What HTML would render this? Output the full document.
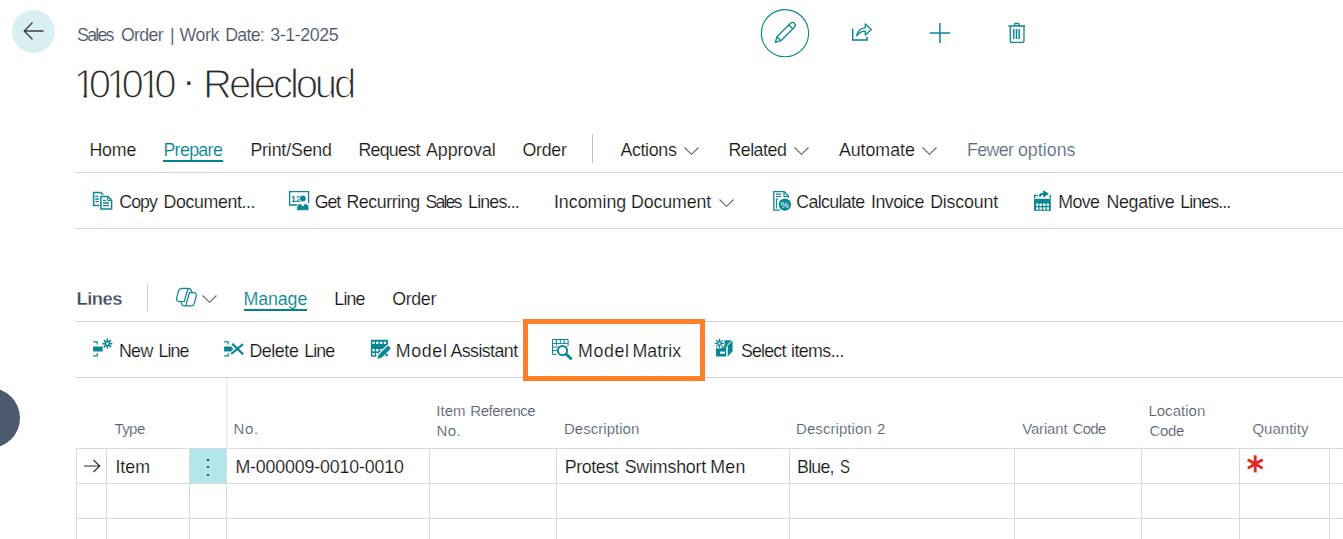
<!DOCTYPE html>
<html lang="en">
<head>
<meta charset="utf-8">
<title>Sales Order</title>
<style>
html,body{margin:0;padding:0;background:#fff;}
body{width:1343px;height:539px;position:relative;overflow:hidden;font-family:"Liberation Sans",sans-serif;}
.t{position:absolute;white-space:pre;}
.a{position:absolute;}
.hl{position:absolute;height:1px;background:#d1d5da;}
.vl{position:absolute;width:1px;background:#d3d5de;}
.gl{position:absolute;background:#d9dade;}
svg{position:absolute;overflow:visible;}
</style>
</head>
<body>
<!-- back button -->
<div class="a" style="left:12px;top:9.600px;width:43px;height:43px;border-radius:50%;background:#d9f0f3;"></div>
<svg style="left:23px;top:21px" width="22" height="20" viewBox="0 0 22 20"><path d="M20.5 10H1.5M9.5 1.5L1.2 10l8.3 8.5" fill="none" stroke="#3c3c3c" stroke-width="1.3"/></svg>

<svg id="icons" style="left:0;top:0" width="1343" height="539" viewBox="0 0 1343 539" fill="none" stroke="#0b8793" stroke-width="1.2">
<!-- header: edit circle + pencil -->
<circle cx="785" cy="33.200" r="23.600" stroke-width="1.100"/>
<g stroke-width="1.300" stroke-linejoin="round">
<path d="M775.300 42.400l1.700-5.600 13.500-13.500a2.700 2.700 0 0 1 3.800 0l.1.100a2.700 2.700 0 0 1 0 3.800l-13.500 13.500z"/>
<path d="M777 36.800l3.900 3.900M788.800 25l3.900 3.900"/>
</g>
<!-- share -->
<path d="M852.700 28.400v11.700h14.400v-3" stroke-width="1.500"/>
<path d="M856.600 35.800c1-5 4.300-7.800 8.700-8v-3.900l6 5.600-6 5.600v-3.900c-3.500.1-6.300 1.400-8.700 4.600z" stroke-width="1.300" stroke-linejoin="round"/>
<!-- plus -->
<path d="M939.900 22.900v20.200M929.700 33h20.400" stroke-width="1.500"/>
<!-- trash -->
<g stroke-width="1.300">
<path d="M1008.300 26h16.900M1014.400 26v-1.500a1 1 0 0 1 1-1h2.700a1 1 0 0 1 1 1V26"/>
<path d="M1010.300 26v14.400a2 2 0 0 0 2 2h9.700a2 2 0 0 0 2-2V26"/>
<path d="M1013.800 29v10M1016.500 29v10M1019.200 29v10" stroke-width="1.500"/>
</g>

<!-- Copy Document -->
<g stroke-width="1.500">
<path d="M99.500 205.600H93.600V192.500h7.300l2.300 2.300"/>
<path d="M95.300 196.300h3M95.300 199h3.600M95.300 201.600h3.600" stroke-width="1.350"/>
<path d="M100.900 196.600h7l3.700 3.700v8.800h-10.700z"/>
<path d="M107.700 196.800v3.700h3.700" stroke-width="1"/>
<path d="M103 200.400h2.800M103 203h6M103 205.600h6" stroke-width="1.350"/>
</g>
<!-- Get Recurring Sales Lines -->
<path d="M297 205h-7.400v-13.400h19v11.500" stroke-width="1.300"/>
<text x="291" y="202.200" font-size="9.500" textLength="10" lengthAdjust="spacingAndGlyphs" stroke="none" fill="#0b8793" font-family="Liberation Sans, sans-serif" font-weight="700">12</text>
<circle cx="302.800" cy="198.500" r="3.400" fill="#0b8793" stroke="#fff" stroke-width=".8"/>
<path d="M296.800 210.400v-2.400a4.400 4.400 0 0 1 4-4.400l2 2.700 2-2.700a4.400 4.400 0 0 1 4 4.400v2.400z" fill="#0b8793" stroke="#fff" stroke-width=".6"/>
<!-- Calculate Invoice Discount -->
<g stroke-width="1.300">
<path d="M780 210.200h-6.200v-18.500h10.400l4.200 4.500v1.500"/>
<path d="M784 191.900v4.600h4.400" stroke-width="1.100"/>
<path d="M776 194.100h5M776 196.500h5" stroke-width="1.200"/>
<path d="M778.400 199h-2v9.500" stroke-width="1.100"/>
</g>
<circle cx="784.900" cy="204.600" r="6.200" fill="#0b8793" stroke="none"/>
<text x="780.800" y="207.900" font-size="9.200" stroke="none" fill="#fff" font-family="Liberation Sans, sans-serif">%</text>
<!-- Move Negative Lines -->
<path d="M1034 198.800h16.800v12h-16.800z" fill="#0b8793" stroke="none"/>
<path d="M1034.600 198.500v-3h3.200M1050.200 198.500v-3.700" stroke-width="1.300"/>
<g fill="#fff" stroke="none">
<rect x="1036" y="203.500" width="2.300" height="2.500"/><rect x="1039.500" y="203.500" width="2.400" height="2.500"/><rect x="1043.100" y="203.500" width="2.400" height="2.500"/><rect x="1046.700" y="203.500" width="2.300" height="2.500"/>
<rect x="1036" y="207.300" width="2.300" height="2.400"/><rect x="1039.500" y="207.300" width="2.400" height="2.400"/><rect x="1043.100" y="207.300" width="2.400" height="2.400"/><rect x="1046.700" y="207.300" width="2.300" height="2.400"/>
</g>
<path d="M1039.900 196.800c0-2.200 1.400-3 3.200-3h2.500" stroke-width="2"/>
<path d="M1043.600 190.700l4.700 3.100-4.700 3.200z" fill="#0b8793" stroke-width=".8" stroke-linejoin="round"/>

<!-- Copilot -->
<g stroke-width="1.200" stroke-linejoin="round" stroke-linecap="round">
<path d="M184.300 301.500h-5c-2.200 0-3.200-1.600-2.600-3.800l2-7.200c.4-1.400 1.200-2.200 2.600-2.200h7.200c1.600 0 2.600 1 3.200 3.200l.3 1.200"/>
<path d="M189.300 292.700h4.300c2.200 0 3.200 1.600 2.600 3.800l-2 7.200c-.4 1.400-1.200 2.200-2.600 2.200h-7.200c-1.600 0-2.600-1-3.200-3.200l-.3-1.200"/>
<path d="M187.900 288.500l-3.600 13M189.400 292.700l-3.500 12.800"/>
</g>
<!-- New Line -->
<g stroke-width="1.200">
<path d="M93.100 341.900h4.100v2.700M93.100 355.900h4.100v-2.700"/>
<rect x="93.100" y="346.500" width="9.600" height="5" fill="#0b8793" stroke="none"/>
<path d="M107.400 338.600v10M102.400 343.600h10M103.900 340.100l7 7M110.900 340.100l-7 7" stroke-width="1.7"/>
<circle cx="107.400" cy="343.600" r="1.2" fill="#fff" stroke="none"/>
</g>
<!-- Delete Line -->
<g stroke-width="1.200">
<path d="M224.100 341.900h4.100v2.700M224.100 355.900h4.100v-2.700"/>
<path d="M224.100 346.500h7l2.200 2.500-2.200 2.500h-7z" fill="#0b8793" stroke="none"/>
<path d="M232.200 343.800l11 10.600M243 344.200l-11.800 9.800" stroke-width="2.200"/>
</g>
<!-- Model Assistant -->
<path d="M370.900 339.800h17v8l-8.500 9h-8.500z" fill="#0b8793" stroke="none"/>
<g fill="#fff" stroke="none">
<rect x="372.400" y="341.700" width="2.300" height="2.200"/><rect x="376.100" y="341.700" width="2.400" height="2.200"/><rect x="379.900" y="341.700" width="2.400" height="2.200"/><rect x="383.700" y="341.700" width="2.300" height="2.200"/>
<rect x="372.400" y="349" width="2.300" height="2.400"/><rect x="376.100" y="349" width="2.400" height="2.400"/><rect x="379.900" y="349" width="2" height="1.500"/>
<rect x="372.400" y="353" width="2.300" height="2.300"/><rect x="376.100" y="353" width="2" height="2.300"/>
</g>
<path d="M379.800 356.600l8.400-8.400" stroke="#fff" stroke-width="6.400" stroke-linecap="round"/>
<path d="M380.900 355.500l7.300-7.300" stroke-width="4.300" stroke-linecap="round"/>
<path d="M377.300 358.900l1.500-4.300 2.800 2.800z" fill="#0b8793" stroke="none"/>
<rect x="385.500" y="353.800" width="2.400" height="2.500" fill="#0b8793" stroke="none"/>
<!-- Model Matrix -->
<g stroke-width="1">
<path d="M556.500 354.500h-4v-15h15.600v6.500"/>
<path d="M552.500 343.400h15.600M552.500 347h4.500M552.500 350.600h4.500M556.300 339.500v6M560.300 339.500v4M564.200 339.500v4M557 347h10.500" />
</g>
<circle cx="562.500" cy="350.600" r="4.600" stroke-width="2" fill="#fff"/>
<path d="M566.300 354.300l4.500 4.200" stroke-width="2.900" stroke-linecap="round"/>
<!-- Select items -->
<path d="M716 346.500h10.200v10h-10.200z" fill="#0b8793" stroke="none"/>
<path d="M724.300 340.200h7.500l-4.500 4.500v2h-3z" fill="#0b8793" stroke="none"/>
<circle cx="719.200" cy="343.200" r="5.300" fill="#fff" stroke="none"/>
<rect x="720" y="351.600" width="5" height="2.100" fill="#fff" stroke="none"/>
<path d="M727.700 345.400l4.900-4.900v10.600a.8.800 0 0 1-.3.600l-4.600 4.700z" fill="#0b8793" stroke="none"/>
<path d="M719.400 338.800v9.200M714.800 343.400h9.200M716.200 340.200l6.400 6.400M722.600 340.200l-6.400 6.400" stroke-width="1.300"/>
<circle cx="719.400" cy="343.400" r="1" fill="#fff" stroke="none"/>
</svg>

<!-- action bar 1 -->
<div class="a" style="left:163px;top:160px;width:60px;height:2px;background:#00838f;"></div>
<div class="vl" style="left:592px;top:134px;height:29px;background:#bfc4cd;"></div>
<div class="hl" style="left:76px;top:172px;width:1267px;"></div>
<div class="hl" style="left:76px;top:228px;width:1267px;"></div>
<svg class="chev" style="left:684px;top:147px" width="15" height="8" viewBox="0 0 15 8"><path d="M.5.500l7 6.800 7-6.800" fill="none" stroke="#5f5f5f" stroke-width="1.050"/></svg>
<svg class="chev" style="left:793.500px;top:147px" width="15" height="8" viewBox="0 0 15 8"><path d="M.5.500l7 6.800 7-6.800" fill="none" stroke="#5f5f5f" stroke-width="1.050"/></svg>
<svg class="chev" style="left:922px;top:147px" width="15" height="8" viewBox="0 0 15 8"><path d="M.5.500l7 6.800 7-6.800" fill="none" stroke="#5f5f5f" stroke-width="1.050"/></svg>
<svg class="chev" style="left:719px;top:199px" width="15" height="8" viewBox="0 0 15 8"><path d="M.5.500l7 6.800 7-6.800" fill="none" stroke="#5f5f5f" stroke-width="1.050"/></svg>
<!--ICONS1-->

<!-- lines section -->
<div class="vl" style="left:147px;top:283px;height:28px;background:#cdd1d7;"></div>
<div class="a" style="left:244px;top:309px;width:63px;height:2px;background:#00838f;"></div>
<div class="hl" style="left:76px;top:321px;width:1267px;"></div>
<div class="hl" style="left:76px;top:377px;width:1267px;"></div>
<svg class="chev" style="left:202px;top:295.200px" width="15" height="8" viewBox="0 0 15 8"><path d="M.5.500l7 6.800 7-6.800" fill="none" stroke="#5f5f5f" stroke-width="1.050"/></svg>
<!--ICONS2-->
<div class="a" style="left:523px;top:319px;width:182px;height:62px;border:5px solid #ff7f27;box-sizing:border-box;"></div>

<!-- left dark bubble -->
<div class="a" style="left:-40px;top:388px;width:60px;height:60px;border-radius:50%;background:#4d596c;"></div>

<!-- grid -->
<div class="gl" style="left:225.500px;top:378px;width:2px;height:70px;background:#eff0f2;"></div>
<div class="a" style="left:190px;top:449px;width:36px;height:34px;background:#b1e7eb;"></div>
<div class="gl" style="left:76px;top:448px;width:1267px;height:1px;"></div>
<div class="gl" style="left:76px;top:483px;width:1267px;height:1px;"></div>
<div class="gl" style="left:76px;top:518px;width:1267px;height:1px;"></div>
<div class="gl" style="left:76px;top:448px;width:1px;height:91px;"></div>
<div class="gl" style="left:106px;top:448px;width:1px;height:91px;"></div>
<div class="gl" style="left:189px;top:448px;width:1px;height:91px;"></div>
<div class="gl" style="left:226px;top:448px;width:1px;height:91px;"></div>
<div class="gl" style="left:429px;top:448px;width:1px;height:91px;"></div>
<div class="gl" style="left:556px;top:448px;width:1px;height:91px;"></div>
<div class="gl" style="left:789px;top:448px;width:1px;height:91px;"></div>
<div class="gl" style="left:1014px;top:448px;width:1px;height:91px;"></div>
<div class="gl" style="left:1141px;top:448px;width:1px;height:91px;"></div>
<div class="gl" style="left:1239px;top:448px;width:1px;height:91px;"></div>
<div class="gl" style="left:1329px;top:448px;width:1px;height:91px;"></div>
<!-- row arrow -->
<svg style="left:84px;top:458.600px" width="17" height="14" viewBox="0 0 17 14"><path d="M0 7h15.500M9.500 1l6.300 6-6.300 6" fill="none" stroke="#2a2a2a" stroke-width="1.100"/></svg>
<!-- dots -->
<div class="a" style="left:206.500px;top:459px;width:2.200px;height:2.200px;border-radius:50%;background:#111;"></div>
<div class="a" style="left:206.500px;top:466.300px;width:2.200px;height:2.200px;border-radius:50%;background:#111;"></div>
<div class="a" style="left:206.500px;top:473.600px;width:2.200px;height:2.200px;border-radius:50%;background:#111;"></div>
<!-- red asterisk -->
<span id="req" class="t" style="left:1244.900px;top:450px;font-family:'DejaVu Sans',sans-serif;font-size:25px;line-height:30px;color:#e3261f;-webkit-text-stroke:0.9px #fff;">✱</span>

<span class="t" style="left:77.1px;top:27px;font-size:17.8px;line-height:17.8px;color:#465064;"><span style="display:inline-block;width:43.8px;letter-spacing:-1.797px;-webkit-text-stroke:0.16px #fff;">Sales </span><span style="display:inline-block;width:49.1px;letter-spacing:-0.683px;-webkit-text-stroke:0.16px #fff;">Order </span><span style="display:inline-block;width:9.6px;-webkit-text-stroke:0.16px #fff;">| </span><span style="display:inline-block;width:45.7px;letter-spacing:-0.491px;-webkit-text-stroke:0.16px #fff;">Work </span><span style="display:inline-block;width:44.9px;letter-spacing:-0.765px;-webkit-text-stroke:0.16px #fff;">Date: </span><span style="display:inline-block;letter-spacing:-0.370px;-webkit-text-stroke:0.16px #fff;">3-1-2025</span></span>
<span class="t" style="left:73.4px;top:64px;font-size:40.2px;line-height:40.2px;color:#2a2a2a;"><span style="display:inline-block;width:15.45px;-webkit-text-stroke:1.2px #fff;clip-path:polygon(0 0,100% 0,100% 29.05px,13.55px 29.05px,13.55px 100%,10.20px 100%,10.20px 29.05px,0 29.05px);transform:translateY(0.5px);">1</span><span style="display:inline-block;width:17.25px;-webkit-text-stroke:1.2px #fff;transform:translateY(0.5px);">0</span><span style="display:inline-block;width:15.45px;-webkit-text-stroke:1.2px #fff;clip-path:polygon(0 0,100% 0,100% 29.05px,13.55px 29.05px,13.55px 100%,10.20px 100%,10.20px 29.05px,0 29.05px);transform:translateY(0.5px);">1</span><span style="display:inline-block;width:17.55px;-webkit-text-stroke:1.2px #fff;transform:translateY(0.5px);">0</span><span style="display:inline-block;width:15.1px;-webkit-text-stroke:1.2px #fff;clip-path:polygon(0 0,100% 0,100% 29.05px,13.55px 29.05px,13.55px 100%,10.20px 100%,10.20px 29.05px,0 29.05px);transform:translateY(0.5px);">1</span><span style="display:inline-block;width:28.9px;-webkit-text-stroke:1.2px #fff;transform:translateY(0.5px);">0 </span><span style="display:inline-block;width:20px;font-size:34.6px;position:relative;top:-4px;-webkit-text-stroke:0.16px #fff;">· </span><span style="display:inline-block;letter-spacing:-3.172px;-webkit-text-stroke:1.2px #fff;transform:translateY(0.5px);">Relecloud</span></span>
<span class="t" style="left:89.4px;top:142px;font-size:17.8px;line-height:17.8px;color:#161616;letter-spacing:-0.181px;-webkit-text-stroke:0.16px #fff;">Home</span>
<span class="t" style="left:163.4px;top:142px;font-size:17.8px;line-height:17.8px;color:#00838f;letter-spacing:-0.645px;-webkit-text-stroke:0.16px #fff;">Prepare</span>
<span class="t" style="left:250.4px;top:142px;font-size:17.8px;line-height:17.8px;color:#161616;letter-spacing:-0.160px;-webkit-text-stroke:0.16px #fff;">Print/Send</span>
<span class="t" style="left:358.4px;top:142px;font-size:17.8px;line-height:17.8px;color:#161616;"><span style="display:inline-block;width:67.7px;letter-spacing:-0.715px;-webkit-text-stroke:0.16px #fff;">Request </span><span style="display:inline-block;letter-spacing:-0.075px;-webkit-text-stroke:0.16px #fff;">Approval</span></span>
<span class="t" style="left:522.4px;top:142px;font-size:17.8px;line-height:17.8px;color:#161616;letter-spacing:-0.258px;-webkit-text-stroke:0.16px #fff;">Order</span>
<span class="t" style="left:620.4px;top:142px;font-size:17.8px;line-height:17.8px;color:#161616;letter-spacing:-0.320px;-webkit-text-stroke:0.16px #fff;">Actions</span>
<span class="t" style="left:728.4px;top:142px;font-size:17.8px;line-height:17.8px;color:#161616;letter-spacing:-0.483px;-webkit-text-stroke:0.16px #fff;">Related</span>
<span class="t" style="left:838.9px;top:142px;font-size:17.8px;line-height:17.8px;color:#161616;letter-spacing:-0.031px;-webkit-text-stroke:0.16px #fff;">Automate</span>
<span class="t" style="left:966.9px;top:142px;font-size:17.8px;line-height:17.8px;color:#5b6b80;"><span style="display:inline-block;width:51px;letter-spacing:-0.570px;-webkit-text-stroke:0.16px #fff;">Fewer </span><span style="display:inline-block;letter-spacing:0.042px;-webkit-text-stroke:0.16px #fff;">options</span></span>
<span class="t" style="left:119.3px;top:194px;font-size:17.8px;line-height:17.8px;color:#161616;"><span style="display:inline-block;width:44.3px;letter-spacing:-1.006px;-webkit-text-stroke:0.16px #fff;">Copy </span><span style="display:inline-block;letter-spacing:-0.392px;-webkit-text-stroke:0.16px #fff;">Document...</span></span>
<span class="t" style="left:314.8px;top:194px;font-size:17.8px;line-height:17.8px;color:#161616;"><span style="display:inline-block;width:31.6px;letter-spacing:-1.160px;-webkit-text-stroke:0.16px #fff;">Get </span><span style="display:inline-block;width:79.2px;letter-spacing:-0.411px;-webkit-text-stroke:0.16px #fff;">Recurring </span><span style="display:inline-block;width:42.5px;letter-spacing:-1.947px;-webkit-text-stroke:0.16px #fff;">Sales </span><span style="display:inline-block;letter-spacing:-0.813px;-webkit-text-stroke:0.16px #fff;">Lines...</span></span>
<span class="t" style="left:553.9px;top:194px;font-size:17.8px;line-height:17.8px;color:#161616;"><span style="display:inline-block;width:77.1px;letter-spacing:0.020px;-webkit-text-stroke:0.16px #fff;">Incoming </span><span style="display:inline-block;letter-spacing:-0.114px;-webkit-text-stroke:0.16px #fff;">Document</span></span>
<span class="t" style="left:796.3px;top:194px;font-size:17.8px;line-height:17.8px;color:#161616;"><span style="display:inline-block;width:74.7px;letter-spacing:-0.655px;-webkit-text-stroke:0.16px #fff;">Calculate </span><span style="display:inline-block;width:59.2px;letter-spacing:-0.492px;-webkit-text-stroke:0.16px #fff;">Invoice </span><span style="display:inline-block;letter-spacing:-0.177px;-webkit-text-stroke:0.16px #fff;">Discount</span></span>
<span class="t" style="left:1058.2px;top:194px;font-size:17.8px;line-height:17.8px;color:#161616;"><span style="display:inline-block;width:48.2px;letter-spacing:-0.564px;-webkit-text-stroke:0.16px #fff;">Move </span><span style="display:inline-block;width:73.8px;letter-spacing:-0.256px;-webkit-text-stroke:0.16px #fff;">Negative </span><span style="display:inline-block;letter-spacing:-0.898px;-webkit-text-stroke:0.16px #fff;">Lines...</span></span>
<span class="t" style="left:76.6px;top:290px;font-size:18.4px;line-height:18.4px;color:#3d4657;font-weight:700;letter-spacing:-0.551px;-webkit-text-stroke:0.3px #fff;transform:translateY(-0.5px);">Lines</span>
<span class="t" style="left:243.4px;top:291px;font-size:17.8px;line-height:17.8px;color:#00838f;letter-spacing:-0.074px;-webkit-text-stroke:0.16px #fff;transform:translateY(-0.3px);">Manage</span>
<span class="t" style="left:334.3px;top:291px;font-size:17.8px;line-height:17.8px;color:#161616;letter-spacing:-0.810px;-webkit-text-stroke:0.16px #fff;transform:translateY(-0.3px);">Line</span>
<span class="t" style="left:392.2px;top:291px;font-size:17.8px;line-height:17.8px;color:#161616;letter-spacing:-0.333px;-webkit-text-stroke:0.16px #fff;transform:translateY(-0.3px);">Order</span>
<span class="t" style="left:118.9px;top:343px;font-size:17.8px;line-height:17.8px;color:#161616;"><span style="display:inline-block;width:39.7px;letter-spacing:-0.615px;-webkit-text-stroke:0.16px #fff;">New </span><span style="display:inline-block;letter-spacing:-0.943px;-webkit-text-stroke:0.16px #fff;">Line</span></span>
<span class="t" style="left:249.4px;top:343px;font-size:17.8px;line-height:17.8px;color:#161616;"><span style="display:inline-block;width:54.8px;letter-spacing:-0.402px;-webkit-text-stroke:0.16px #fff;">Delete </span><span style="display:inline-block;letter-spacing:-0.876px;-webkit-text-stroke:0.16px #fff;">Line</span></span>
<span class="t" style="left:395.8px;top:343px;font-size:17.8px;line-height:17.8px;color:#161616;"><span style="display:inline-block;width:54.6px;letter-spacing:0.655px;-webkit-text-stroke:0.16px #fff;">Model </span><span style="display:inline-block;letter-spacing:-0.550px;-webkit-text-stroke:0.16px #fff;">Assistant</span></span>
<span class="t" style="left:578.1px;top:343px;font-size:17.8px;line-height:17.8px;color:#161616;"><span style="display:inline-block;width:54.4px;letter-spacing:0.580px;-webkit-text-stroke:0.16px #fff;">Model </span><span style="display:inline-block;letter-spacing:0.037px;-webkit-text-stroke:0.16px #fff;">Matrix</span></span>
<span class="t" style="left:741px;top:343px;font-size:17.8px;line-height:17.8px;color:#161616;"><span style="display:inline-block;width:50px;letter-spacing:-0.816px;-webkit-text-stroke:0.16px #fff;">Select </span><span style="display:inline-block;letter-spacing:-0.566px;-webkit-text-stroke:0.16px #fff;">items...</span></span>
<span class="t" style="left:114.4px;top:421px;font-size:15px;line-height:15px;color:#566072;letter-spacing:-0.559px;-webkit-text-stroke:0.16px #fff;">Type</span>
<span class="t" style="left:233.4px;top:421px;font-size:15px;line-height:15px;color:#566072;letter-spacing:0.663px;-webkit-text-stroke:0.16px #fff;">No.</span>
<span class="t" style="left:436.3px;top:403px;font-size:15px;line-height:15px;color:#566072;"><span style="display:inline-block;width:34px;letter-spacing:0.008px;-webkit-text-stroke:0.16px #fff;">Item </span><span style="display:inline-block;letter-spacing:-0.483px;-webkit-text-stroke:0.16px #fff;">Reference</span></span>
<span class="t" style="left:436.4px;top:423px;font-size:15px;line-height:15px;color:#566072;letter-spacing:0.513px;-webkit-text-stroke:0.16px #fff;">No.</span>
<span class="t" style="left:564px;top:421px;font-size:15px;line-height:15px;color:#566072;letter-spacing:0.021px;-webkit-text-stroke:0.16px #fff;">Description</span>
<span class="t" style="left:796px;top:421px;font-size:15px;line-height:15px;color:#566072;"><span style="display:inline-block;width:81px;letter-spacing:0.071px;-webkit-text-stroke:0.16px #fff;">Description </span><span style="display:inline-block;-webkit-text-stroke:0.16px #fff;">2</span></span>
<span class="t" style="left:1022.2px;top:421px;font-size:15px;line-height:15px;color:#566072;"><span style="display:inline-block;width:50.6px;letter-spacing:-0.174px;-webkit-text-stroke:0.16px #fff;">Variant </span><span style="display:inline-block;letter-spacing:-0.872px;-webkit-text-stroke:0.16px #fff;">Code</span></span>
<span class="t" style="left:1148.4px;top:403px;font-size:15px;line-height:15px;color:#566072;letter-spacing:0.019px;-webkit-text-stroke:0.16px #fff;">Location</span>
<span class="t" style="left:1149.4px;top:423px;font-size:15px;line-height:15px;color:#566072;letter-spacing:-0.339px;-webkit-text-stroke:0.16px #fff;">Code</span>
<span class="t" style="left:1252.4px;top:421px;font-size:15px;line-height:15px;color:#566072;letter-spacing:0.020px;-webkit-text-stroke:0.16px #fff;">Quantity</span>
<span class="t" style="left:115.4px;top:459px;font-size:17.8px;line-height:17.8px;color:#161616;letter-spacing:0.010px;-webkit-text-stroke:0.16px #fff;">Item</span>
<span class="t" style="left:235.4px;top:459px;font-size:17.8px;line-height:17.8px;color:#161616;letter-spacing:-0.155px;-webkit-text-stroke:0.16px #fff;">M-000009-0010-0010</span>
<span class="t" style="left:564.8px;top:459px;font-size:17.8px;line-height:17.8px;color:#161616;"><span style="display:inline-block;width:59.9px;letter-spacing:-0.415px;-webkit-text-stroke:0.16px #fff;">Protest </span><span style="display:inline-block;width:85.6px;letter-spacing:-0.182px;-webkit-text-stroke:0.16px #fff;">Swimshort </span><span style="display:inline-block;letter-spacing:0.249px;-webkit-text-stroke:0.16px #fff;">Men</span></span>
<span class="t" style="left:797.1px;top:459px;font-size:17.8px;line-height:17.8px;color:#161616;"><span style="display:inline-block;width:42.8px;letter-spacing:-0.797px;-webkit-text-stroke:0.16px #fff;">Blue, </span><span style="display:inline-block;-webkit-text-stroke:0.16px #fff;transform:scaleX(.84);transform-origin:0 50%;">S</span></span>
</body>
</html>
